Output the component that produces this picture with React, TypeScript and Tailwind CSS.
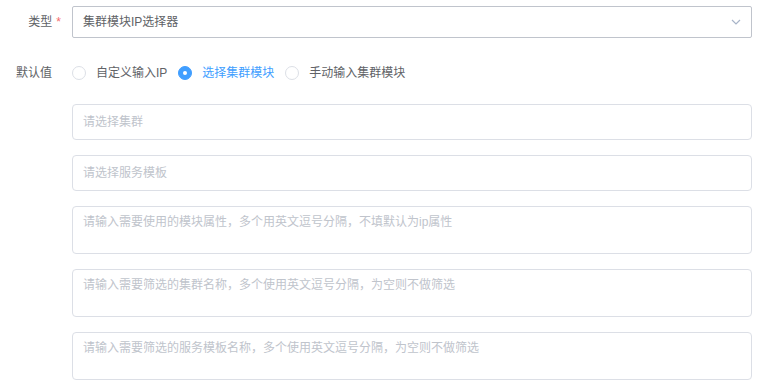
import { useState } from "react";

const font = { fontFamily: '"Liberation Sans", "Noto Sans CJK SC", sans-serif' };

const options = ["自定义输入IP", "选择集群模块", "手动输入集群模块"];

const Radio = ({ label, checked, onClick }: { label: string; checked: boolean; onClick: () => void }) => (
  <label onClick={onClick} className="flex items-center cursor-pointer mr-[11px]">
    <span
      className={
        checked
          ? "w-[14px] h-[14px] rounded-full bg-[#409eff] border border-[#409eff] flex items-center justify-center"
          : "w-[14px] h-[14px] rounded-full bg-white border border-[#dcdfe6]"
      }
    >
      {checked && <span className="w-[4px] h-[4px] rounded-full bg-white" />}
    </span>
    <span className={checked ? "ml-[10px] text-[#409eff]" : "ml-[10px] text-[#606266]"}>{label}</span>
  </label>
);

const Field = ({ placeholder, area }: { placeholder: string; area?: boolean }) =>
  area ? (
    <textarea
      placeholder={placeholder}
      className="w-full h-[48px] resize-none rounded-[4px] border border-[#dcdfe6] bg-white px-[10px] pt-[5px] text-[12px] leading-5 text-[#606266] placeholder:text-[#c0c4cc] outline-none"
    />
  ) : (
    <input
      placeholder={placeholder}
      className="w-full h-[36px] rounded-[4px] border border-[#dcdfe6] bg-white px-[10px] text-[12px] text-[#606266] placeholder:text-[#c0c4cc] outline-none"
    />
  );

export default function App() {
  const [mode, setMode] = useState(1);

  return (
    <div style={font} className="w-[764px] h-[387px] bg-white text-[12px] text-[#606266] pt-[6px]">
      <div className="flex items-center">
        <div className="w-[72px] pr-[11px] flex justify-end items-center">
          类型<span className="ml-[4px] text-[#f56c6c]">*</span>
        </div>
        <div className="w-[680px] h-[32px] rounded-[2px] border border-[#c0c4cc] flex items-center justify-between pl-[10px] pr-[10px]">
          <span>集群模块IP选择器</span>
          <svg width="10" height="6" viewBox="0 0 10 6" fill="none">
            <path d="M1 1l4 4 4-4" stroke="#a8b4c8" strokeWidth="1.2" />
          </svg>
        </div>
      </div>

      <div className="flex items-center h-[32px] mt-[19px]">
        <div className="w-[72px] pl-[16px]">默认值</div>
        <div className="flex items-center">
          {options.map((o, i) => (
            <Radio key={o} label={o} checked={mode === i} onClick={() => setMode(i)} />
          ))}
        </div>
      </div>

      <div className="ml-[72px] w-[680px] mt-[15px] flex flex-col gap-[15px]">
        <Field placeholder="请选择集群" />
        <Field placeholder="请选择服务模板" />
        <Field area placeholder="请输入需要使用的模块属性，多个用英文逗号分隔，不填默认为ip属性" />
        <Field area placeholder="请输入需要筛选的集群名称，多个使用英文逗号分隔，为空则不做筛选" />
        <Field area placeholder="请输入需要筛选的服务模板名称，多个使用英文逗号分隔，为空则不做筛选" />
      </div>
    </div>
  );
}
